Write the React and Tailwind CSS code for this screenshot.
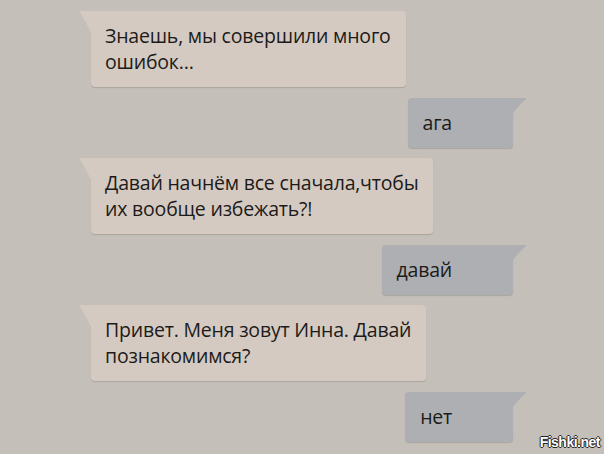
import React from 'react'

const messages = [
  { from: 'them', lines: ['Знаешь, мы совершили много', 'ошибок…'] },
  { from: 'me', lines: ['ага'] },
  { from: 'them', lines: ['Давай начнём все сначала,чтобы', 'их вообще избежать?!'] },
  { from: 'me', lines: ['давай'] },
  { from: 'them', lines: ['Привет. Меня зовут Инна. Давай', 'познакомимся?'] },
  { from: 'me', lines: ['нет'] },
]

const Tail = ({ side, color }) =>
  side === 'left' ? (
    <svg
      className="absolute top-0 -left-[12px]"
      width="13"
      height="24"
      viewBox="0 0 13 24"
    >
      <path d="M0 0 H13 V24 Q6 9 0 0 Z" fill={color} />
    </svg>
  ) : (
    <svg
      className="absolute top-0 -right-[14px]"
      width="15"
      height="16"
      viewBox="0 0 15 16"
    >
      <path d="M15 0 H0 V16 Q8 6 15 0 Z" fill={color} />
    </svg>
  )

const Bubble = ({ from, lines }) => {
  const mine = from === 'me'
  return (
    <div
      className={`relative rounded-[4px] py-3 text-[19.5px] leading-[26px] tracking-[-0.2px] text-[#1c1b1a] shadow-[0_1px_1px_rgba(0,0,0,0.14)] ${
        mine
          ? 'self-end mr-[91px] bg-[#adafb2] pl-[15px] pr-[61px] rounded-tr-none'
          : 'self-start ml-[91px] bg-[#d5cac1] pl-[14px] pr-[15px] rounded-tl-none'
      }`}
    >
      <Tail side={mine ? 'right' : 'left'} color={mine ? '#adafb2' : '#d5cac1'} />
      {lines.map((line, i) => (
        <div key={i} className="whitespace-nowrap">
          {line}
        </div>
      ))}
    </div>
  )
}

export default function App() {
  return (
    <div
      className="relative w-[604px] h-[454px] overflow-hidden bg-[#c4bfb8] flex flex-col gap-[10.5px] pt-[11px]"
      style={{ fontFamily: '"Open Sans", "Noto Sans", sans-serif' }}
    >
      {messages.map((m, i) => (
        <Bubble key={i} {...m} />
      ))}
      <span
        className="absolute right-[4px] bottom-[5px] text-[14px] leading-none font-bold text-white tracking-[-0.5px] [text-shadow:-1px_0_#222,1px_0_#222,0_-1px_#222,0_1px_#222]"
        style={{ fontFamily: '"Liberation Sans", Arial, sans-serif' }}
      >
        Fishki.net
      </span>
    </div>
  )
}
